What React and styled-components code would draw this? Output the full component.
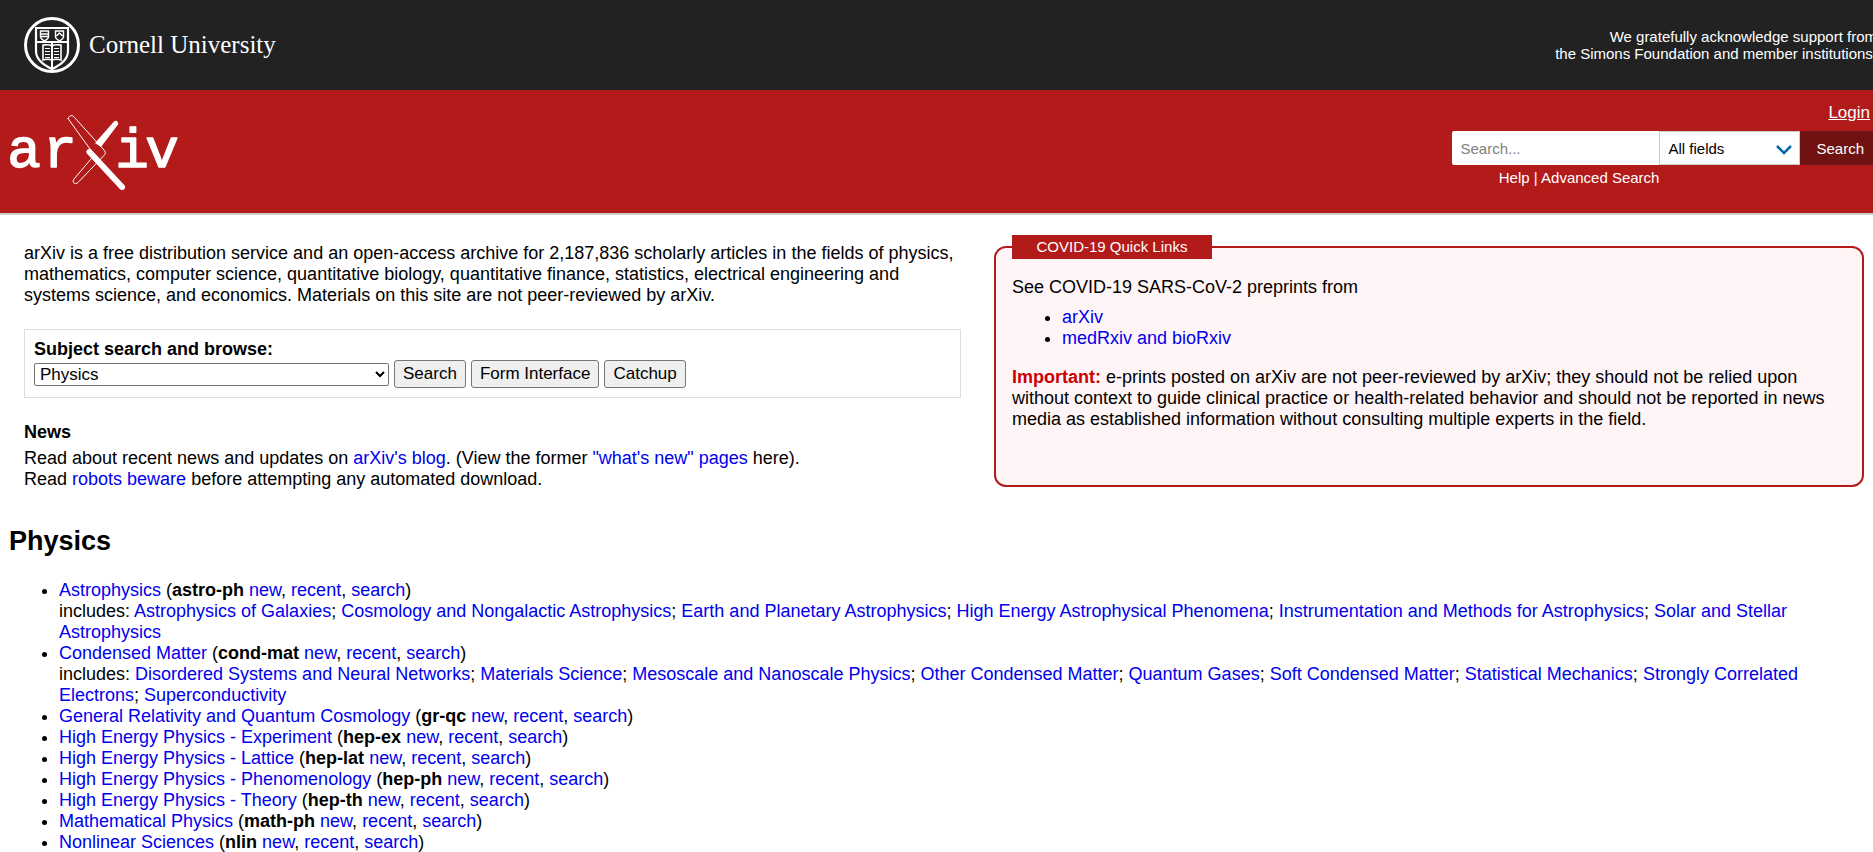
import React from 'react';
import styled, { createGlobalStyle } from 'styled-components';

const GlobalStyle = createGlobalStyle`
  body {
    margin: 0;
    background: #fff;
    color: #000;
    font-family: Arial, "Liberation Sans", sans-serif;
    font-size: 18px;
    line-height: 21px;
    overflow: hidden;
  }
`;

const Link = styled.a`
  color: #0000ee;
  text-decoration: none;

  &:hover {
    text-decoration: underline;
  }
`;

const TopBar = styled.div`
  display: flex;
  align-items: center;
  justify-content: space-between;
  height: 90px;
  padding-left: 24px;
  background: #222;
  color: #fff;
`;

const CornellLink = styled.a`
  display: flex;
  align-items: center;
  gap: 8px;
  color: #fff;
  font-family: "Palatino Linotype", "Liberation Serif", serif;
  font-size: 25px;
  line-height: 30px;
  text-decoration: none;
`;

const Support = styled.p`
  margin: 0 -4px 0 0;
  font-size: 15px;
  line-height: 17px;
  text-align: right;
`;

const Banner = styled.header`
  display: flex;
  align-items: flex-start;
  justify-content: space-between;
  padding-left: 8px;
  border-bottom: 2px solid #ccc;
  background: #b31b1b;
  color: #fff;

  a {
    color: #fff;
  }
`;

const LogoLink = styled.a`
  display: block;
  margin-top: 24px;

  svg {
    display: block;
    overflow: visible;
  }
`;

const BannerTools = styled.div`
  display: flex;
  flex-direction: column;
  height: 123px;
  margin-right: -7px;
  font-size: 15px;
  line-height: 18px;
`;

const Login = styled.a`
  align-self: flex-end;
  margin: 14px 10px 9px 0;
  font-size: 17px;
`;

const SearchForm = styled.form`
  display: flex;
  height: 34px;
`;

const SearchInput = styled.input`
  box-sizing: border-box;
  width: 207px;
  padding: 0 8px;
  border: 0;
  border-radius: 2px 0 0 2px;
  font: 15px Arial, "Liberation Sans", sans-serif;

  &::placeholder {
    color: #808080;
  }
`;

const FieldWrap = styled.div`
  position: relative;
  display: flex;

  svg {
    position: absolute;
    top: 14px;
    right: 8px;
    pointer-events: none;
  }
`;

const FieldSelect = styled.select`
  box-sizing: border-box;
  width: 141px;
  padding: 0 8px;
  border: 1px solid #ccc;
  border-radius: 0;
  background: #fff;
  color: #000;
  font: 15px Arial, "Liberation Sans", sans-serif;
  appearance: none;
`;

const SearchButton = styled.button`
  padding: 0 16px;
  border: 0;
  border-radius: 2px;
  background: #701112;
  color: #fff;
  font: 15px Arial, "Liberation Sans", sans-serif;
`;

const HelpRow = styled.div`
  width: 207px;
  margin-top: 4px;
  text-align: right;

  a {
    text-decoration: none;
  }
`;

const Intro = styled.section`
  display: grid;
  grid-template-columns: 14fr 13fr;
  align-items: start;
  gap: 33px;
  padding: 20px 9px 0 24px;
`;

const Summary = styled.div`
  padding-top: 8px;
`;

const Lead = styled.p`
  margin: 0;
`;

const SubjectForm = styled.form`
  margin: 23px 0 24px;
  padding: 9px;
  border: 1px solid #ddd;
`;

const SubjectLabel = styled.label`
  display: block;
  font-weight: bold;
`;

const SubjectRow = styled.div`
  display: flex;
  align-items: center;
  gap: 5px;
`;

const SubjectSelect = styled.select`
  width: 355px;
  height: 23px;
  padding-left: 1px;
  border: 1px solid #767676;
  border-radius: 2px;
  background: #fff;
  color: #000;
  font: 17px Arial, "Liberation Sans", sans-serif;
`;

const PlainButton = styled.button`
  height: 28px;
  padding: 0 8px;
  border: 1px solid #767676;
  border-radius: 3px;
  background: #efefef;
  color: #000;
  font: 17px Arial, "Liberation Sans", sans-serif;
`;

const NewsHeading = styled.h3`
  margin: 0 0 5px;
  font-size: 18px;
`;

const QuickLinks = styled.section`
  box-sizing: border-box;
  min-height: 241px;
  margin-top: 11px;
  padding: 0 16px;
  border: 2px solid #b31b1b;
  border-radius: 12px;
  background: #fff5f6;
`;

const QuickTitle = styled.h2`
  width: 200px;
  margin: -13px 0 18px;
  background: #b31b1b;
  color: #fff;
  font-size: 15px;
  font-weight: normal;
  line-height: 24px;
  text-align: center;
`;

const QuickList = styled.ul`
  margin: 9px 0 18px;
  padding-left: 50px;
`;

const Important = styled.strong`
  color: #cc0000;
`;

const Archive = styled.section`
  padding: 36px 48px 0 9px;
`;

const ArchiveTitle = styled.h2`
  margin: 0;
  font-size: 27px;
  line-height: 30px;
`;

const ArchiveList = styled.ul`
  margin: 24px 0 0;
  padding-left: 50px;
`;

const archives = [
  {
    name: 'Astrophysics',
    id: 'astro-ph',
    includes: [
      'Astrophysics of Galaxies',
      'Cosmology and Nongalactic Astrophysics',
      'Earth and Planetary Astrophysics',
      'High Energy Astrophysical Phenomena',
      'Instrumentation and Methods for Astrophysics',
      'Solar and Stellar Astrophysics'
    ]
  },
  {
    name: 'Condensed Matter',
    id: 'cond-mat',
    includes: [
      'Disordered Systems and Neural Networks',
      'Materials Science',
      'Mesoscale and Nanoscale Physics',
      'Other Condensed Matter',
      'Quantum Gases',
      'Soft Condensed Matter',
      'Statistical Mechanics',
      'Strongly Correlated Electrons',
      'Superconductivity'
    ]
  },
  { name: 'General Relativity and Quantum Cosmology', id: 'gr-qc' },
  { name: 'High Energy Physics - Experiment', id: 'hep-ex' },
  { name: 'High Energy Physics - Lattice', id: 'hep-lat' },
  { name: 'High Energy Physics - Phenomenology', id: 'hep-ph' },
  { name: 'High Energy Physics - Theory', id: 'hep-th' },
  { name: 'Mathematical Physics', id: 'math-ph' },
  { name: 'Nonlinear Sciences', id: 'nlin' }
];

const CornellSeal = () => (
  <svg width="57" height="57" viewBox="0 0 57 57" fill="none" stroke="#fff" aria-hidden="true">
    <circle cx="28" cy="28" r="26.5" strokeWidth="3" />
    <path d="M12 11H44V34C44 43 36 48 28 52C20 48 12 43 12 34Z" strokeWidth="2.2" />
    <path d="M12 25H44M28 25V52" strokeWidth="2" />
    <path d="M16.500 14H24.500V20C24.500 22 22 23 20.500 24C19 23 16.500 22 16.500 20ZM16.500 17H24.500M17 19.500H24" strokeWidth="1.4" />
    <path d="M31.500 14H39.500V20C39.500 22 37 23 35.500 24C34 23 31.500 22 31.500 20ZM32.500 19L35.500 16L38.500 19" strokeWidth="1.4" />
    <path d="M28 29C25 27 22 28 19 28V43C22 42 25 42 28 43C31 42 34 42 37 43V28C34 28 31 27 28 29Z" strokeWidth="1.6" />
    <path d="M21 31.500H26M21 34.500H26M21 37.500H26M21 40.500H26M30 31.500H35M30 34.500H35M30 37.500H35M30 40.500H35" strokeWidth="1.2" />
  </svg>
);

const ArxivLogo = () => (
  <svg width="170" height="78" viewBox="8 114 170 78" role="img" aria-label="arXiv">
    <g
      fill="#fff"
      stroke="#fff"
      strokeWidth="1.4"
      strokeLinejoin="round"
      fontFamily="Liberation Mono, monospace"
      fontSize="56"
      textAnchor="middle"
    >
      <text x="24" y="167">a</text>
      <text x="60" y="167">r</text>
      <text x="132" y="167">i</text>
      <text x="162" y="167">v</text>
    </g>
    <g strokeLinecap="round" fill="none">
      <path d="M95 143L114 121.500C116 119.500 119 122 118 124.500L101 147Z" fill="#fff" />
      <path d="M68 118.500C69.500 114.500 73 115 74.500 117.500L104 150C106 152.500 105.500 154 103.500 156L78 182.500C75 185.500 71.500 182 74 179L91 159" stroke="#fff" />
      <path d="M68 118.500L90 149" stroke="#fff" />
      <path d="M89.500 152L122 187" stroke="#fff" strokeWidth="6" />
    </g>
  </svg>
);

/**
 * @param {{ name: string, id: string, includes?: string[] }} archive
 */
const ArchiveItem = ({ archive }) => (
  <li>
    <Link href={`#${archive.id}`}>{archive.name}</Link> (<b>{archive.id}</b>{' '}
    <Link href="#new">new</Link>, <Link href="#recent">recent</Link>, <Link href="#search">search</Link>)
    {archive.includes && (
      <div>
        includes:{' '}
        {archive.includes.map((val, i) => (
          <React.Fragment key={val}>
            {i > 0 && '; '}
            <Link href={`#${archive.id}-${i}`}>{val}</Link>
          </React.Fragment>
        ))}
      </div>
    )}
  </li>
);

const App = () => (
  <>
    <GlobalStyle />
    <TopBar>
      <CornellLink href="#cornell">
        <CornellSeal />
        Cornell University
      </CornellLink>
      <Support>
        We gratefully acknowledge support from<br />
        the Simons Foundation and member institutions.
      </Support>
    </TopBar>

    <Banner>
      <LogoLink href="#home">
        <ArxivLogo />
      </LogoLink>
      <BannerTools>
        <Login href="#login">Login</Login>
        <SearchForm onSubmit={e => e.preventDefault()}>
          <SearchInput type="text" placeholder="Search..." aria-label="Search term or terms" />
          <FieldWrap>
            <FieldSelect aria-label="Field to search">
              <option>All fields</option>
            </FieldSelect>
            <svg width="16" height="10" viewBox="0 0 16 10" fill="none" stroke="#0068ac" strokeWidth="2.5" aria-hidden="true">
              <path d="M1 1L8 8L15 1" />
            </svg>
          </FieldWrap>
          <SearchButton>Search</SearchButton>
        </SearchForm>
        <HelpRow>
          <a href="#help">Help</a> | <a href="#advanced">Advanced Search</a>
        </HelpRow>
      </BannerTools>
    </Banner>

    <main>
      <Intro>
        <Summary>
          <Lead>
            arXiv is a free distribution service and an open-access archive for 2,187,836 scholarly
            articles in the fields of physics, mathematics, computer science, quantitative biology,
            quantitative finance, statistics, electrical engineering and systems science, and
            economics. Materials on this site are not peer-reviewed by arXiv.
          </Lead>
          <SubjectForm onSubmit={e => e.preventDefault()}>
            <SubjectLabel htmlFor="subject">Subject search and browse:</SubjectLabel>
            <SubjectRow>
              <SubjectSelect id="subject">
                <option>Physics</option>
              </SubjectSelect>
              <PlainButton>Search</PlainButton>
              <PlainButton>Form Interface</PlainButton>
              <PlainButton>Catchup</PlainButton>
            </SubjectRow>
          </SubjectForm>
          <NewsHeading>News</NewsHeading>
          Read about recent news and updates on <Link href="#blog">arXiv's blog</Link>. (View the
          former <Link href="#whatsnew">"what's new" pages</Link> here).<br />
          Read <Link href="#robots">robots beware</Link> before attempting any automated download.
        </Summary>

        <QuickLinks>
          <QuickTitle>COVID-19 Quick Links</QuickTitle>
          See COVID-19 SARS-CoV-2 preprints from
          <QuickList>
            <li><Link href="#covid-arxiv">arXiv</Link></li>
            <li><Link href="#covid-medrxiv">medRxiv and bioRxiv</Link></li>
          </QuickList>
          <Important>Important:</Important> e-prints posted on arXiv are not peer-reviewed by arXiv;
          they should not be relied upon without context to guide clinical practice or
          health-related behavior and should not be reported in news media as established
          information without consulting multiple experts in the field.
        </QuickLinks>
      </Intro>

      <Archive>
        <ArchiveTitle>Physics</ArchiveTitle>
        <ArchiveList>
          {archives.map(archive => (
            <ArchiveItem key={archive.id} archive={archive} />
          ))}
        </ArchiveList>
      </Archive>
    </main>
  </>
);

export default App;
